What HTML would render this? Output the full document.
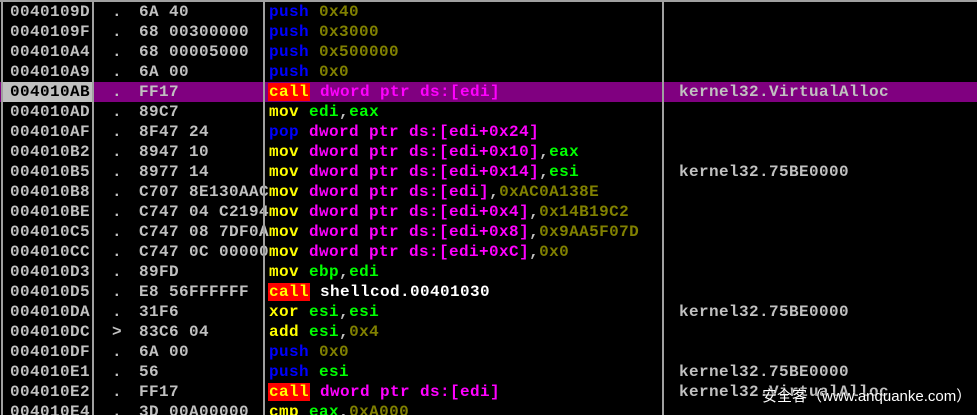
<!DOCTYPE html>
<html><head><meta charset="utf-8"><style>
html,body{margin:0;width:977px;height:415px;overflow:hidden}
body{background:#000;position:relative;font-family:"Liberation Mono",monospace;font-weight:bold;font-size:16px;letter-spacing:0.4px;color:#c0c0c0}
.r{position:absolute;left:0;width:977px;height:20px;line-height:20px;white-space:pre}
.r span{position:absolute;top:0}
.a{left:10px}.d{left:112px}.b{left:139px}.i{left:269px}.c{left:679px}
.hl{background:#800080}
.hl .ab{position:absolute;left:3px;top:0;width:90px;height:20px;background:#c0c0c0}
.Y{color:#ffff00}.M{color:#ff00ff}.G{color:#00ff00}.O{color:#808000}.B{color:#0000ff}.W{color:#fff}
.i span{position:static}
.cl{background:#ff0000;color:#ffff00;padding:0 1px;margin-left:-1px}
.v{position:absolute;top:0;width:2px;height:415px;background:#a0a0a0}
.wm{position:absolute;left:762px;top:385px;font-family:"Liberation Sans","Noto Sans CJK SC",sans-serif;font-weight:normal;font-size:15px;letter-spacing:0;color:#fff;text-shadow:0 0 2px #000}
</style></head><body>
<div style="position:absolute;left:0;top:0;width:977px;height:2px;background:#a0a0a0"></div>
<div class="r" style="top:2px"><span class="a">0040109D</span><span class="d">.</span><span class="b">6A 40</span><span class="i"><span class="B">push</span> <span class="O">0x40</span></span></div>
<div class="r" style="top:22px"><span class="a">0040109F</span><span class="d">.</span><span class="b">68 00300000</span><span class="i"><span class="B">push</span> <span class="O">0x3000</span></span></div>
<div class="r" style="top:42px"><span class="a">004010A4</span><span class="d">.</span><span class="b">68 00005000</span><span class="i"><span class="B">push</span> <span class="O">0x500000</span></span></div>
<div class="r" style="top:62px"><span class="a">004010A9</span><span class="d">.</span><span class="b">6A 00</span><span class="i"><span class="B">push</span> <span class="O">0x0</span></span></div>
<div class="r hl" style="top:82px"><div class="ab"></div><span class="a" style="color:#000">004010AB</span><span class="d">.</span><span class="b">FF17</span><span class="i"><span class="cl">call</span> <span class="M">dword ptr ds:[edi]</span></span><span class="c">kernel32.VirtualAlloc</span></div>
<div class="r" style="top:102px"><span class="a">004010AD</span><span class="d">.</span><span class="b">89C7</span><span class="i"><span class="Y">mov</span> <span class="G">edi</span>,<span class="G">eax</span></span></div>
<div class="r" style="top:122px"><span class="a">004010AF</span><span class="d">.</span><span class="b">8F47 24</span><span class="i"><span class="B">pop</span> <span class="M">dword ptr ds:[edi+0x24]</span></span></div>
<div class="r" style="top:142px"><span class="a">004010B2</span><span class="d">.</span><span class="b">8947 10</span><span class="i"><span class="Y">mov</span> <span class="M">dword ptr ds:[edi+0x10]</span>,<span class="G">eax</span></span></div>
<div class="r" style="top:162px"><span class="a">004010B5</span><span class="d">.</span><span class="b">8977 14</span><span class="i"><span class="Y">mov</span> <span class="M">dword ptr ds:[edi+0x14]</span>,<span class="G">esi</span></span><span class="c">kernel32.75BE0000</span></div>
<div class="r" style="top:182px"><span class="a">004010B8</span><span class="d">.</span><span class="b">C707 8E130AAC</span><span class="i" style="background:#000"><span class="Y">mov</span> <span class="M">dword ptr ds:[edi]</span>,<span class="O">0xAC0A138E</span></span></div>
<div class="r" style="top:202px"><span class="a">004010BE</span><span class="d">.</span><span class="b">C747 04 C2194B</span><span class="i" style="background:#000"><span class="Y">mov</span> <span class="M">dword ptr ds:[edi+0x4]</span>,<span class="O">0x14B19C2</span></span></div>
<div class="r" style="top:222px"><span class="a">004010C5</span><span class="d">.</span><span class="b">C747 08 7DF0A5</span><span class="i" style="background:#000"><span class="Y">mov</span> <span class="M">dword ptr ds:[edi+0x8]</span>,<span class="O">0x9AA5F07D</span></span></div>
<div class="r" style="top:242px"><span class="a">004010CC</span><span class="d">.</span><span class="b">C747 0C 000000</span><span class="i" style="background:#000"><span class="Y">mov</span> <span class="M">dword ptr ds:[edi+0xC]</span>,<span class="O">0x0</span></span></div>
<div class="r" style="top:262px"><span class="a">004010D3</span><span class="d">.</span><span class="b">89FD</span><span class="i"><span class="Y">mov</span> <span class="G">ebp</span>,<span class="G">edi</span></span></div>
<div class="r" style="top:282px"><span class="a">004010D5</span><span class="d">.</span><span class="b">E8 56FFFFFF</span><span class="i"><span class="cl">call</span> <span class="W">shellcod.00401030</span></span></div>
<div class="r" style="top:302px"><span class="a">004010DA</span><span class="d">.</span><span class="b">31F6</span><span class="i"><span class="Y">xor</span> <span class="G">esi</span>,<span class="G">esi</span></span><span class="c">kernel32.75BE0000</span></div>
<div class="r" style="top:322px"><span class="a">004010DC</span><span class="d">&gt;</span><span class="b">83C6 04</span><span class="i"><span class="Y">add</span> <span class="G">esi</span>,<span class="O">0x4</span></span></div>
<div class="r" style="top:342px"><span class="a">004010DF</span><span class="d">.</span><span class="b">6A 00</span><span class="i"><span class="B">push</span> <span class="O">0x0</span></span></div>
<div class="r" style="top:362px"><span class="a">004010E1</span><span class="d">.</span><span class="b">56</span><span class="i"><span class="B">push</span> <span class="G">esi</span></span><span class="c">kernel32.75BE0000</span></div>
<div class="r" style="top:382px"><span class="a">004010E2</span><span class="d">.</span><span class="b">FF17</span><span class="i"><span class="cl">call</span> <span class="M">dword ptr ds:[edi]</span></span><span class="c">kernel32.VirtualAlloc</span></div>
<div class="r" style="top:402px"><span class="a">004010E4</span><span class="d">.</span><span class="b">3D 00A00000</span><span class="i"><span class="Y">cmp</span> <span class="G">eax</span>,<span class="O">0xA000</span></span></div>
<div class="v" style="left:1px"></div>
<div class="v" style="left:92px"></div>
<div class="v" style="left:263px"></div>
<div class="v" style="left:662px"></div>
<div class="wm">安全客（www.anquanke.com）</div>
</body></html>
